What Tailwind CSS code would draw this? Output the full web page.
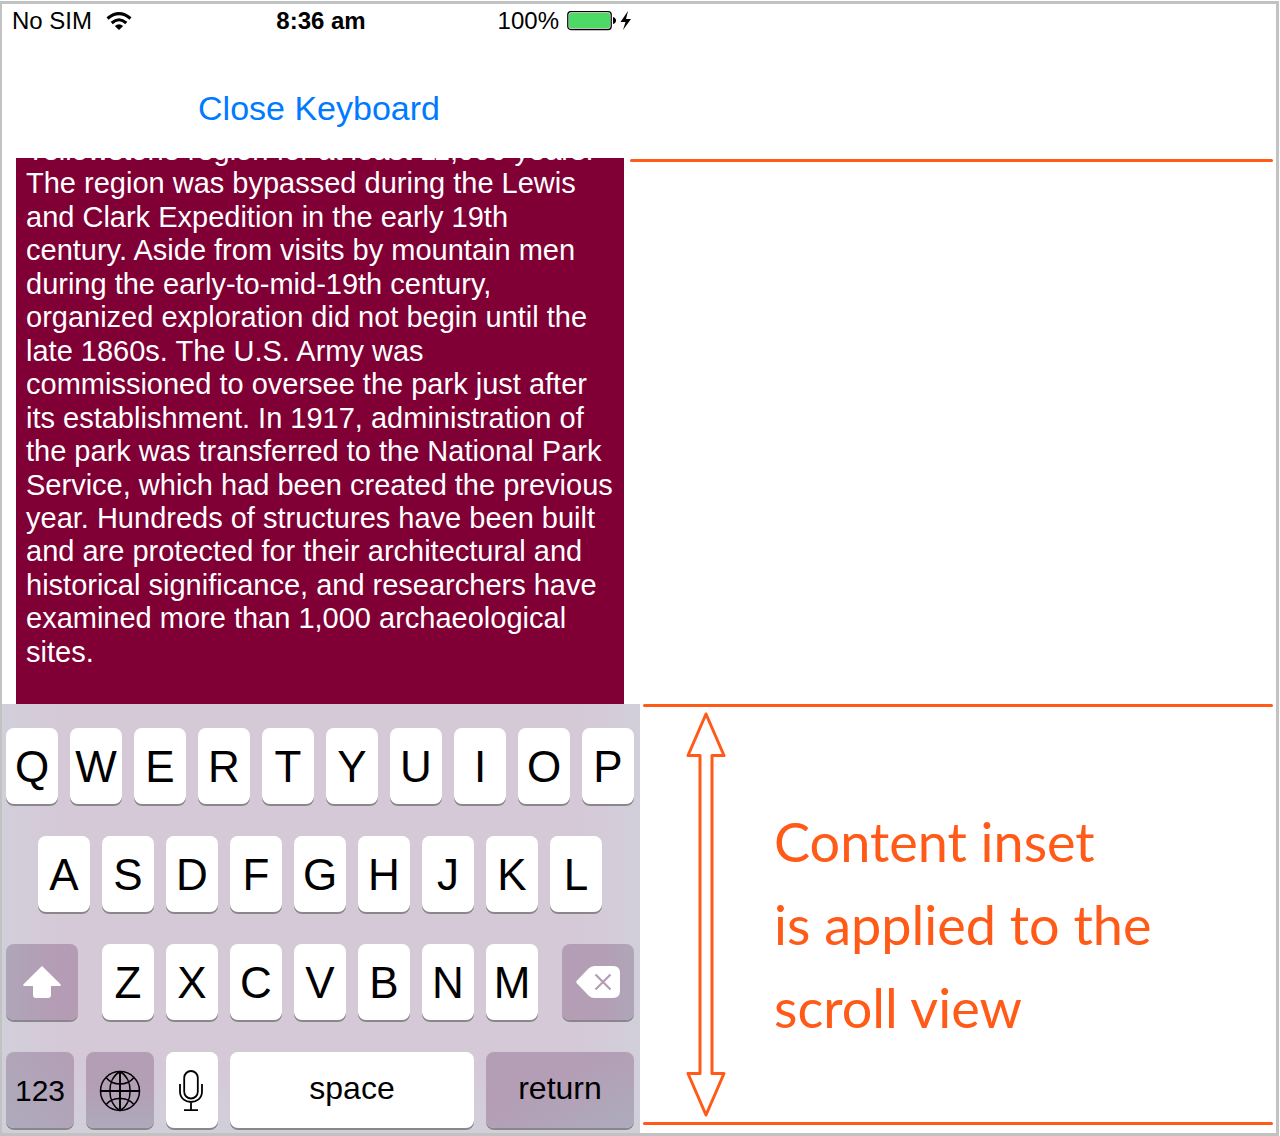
<!DOCTYPE html>
<html lang="en">
<head>
<meta charset="utf-8">
<title>Keyboard content inset</title>
<script src="https://cdn.jsdelivr.net/npm/@tailwindcss/browser@4"></script>
</head>
<body class="flex min-h-screen flex-col bg-white pt-px pr-px font-['Liberation_Sans',Arial,sans-serif] text-black">
<main class="flex flex-1 flex-col border-3 border-l-2 border-[#c1c2c2]">
  <div class="grid flex-1 grid-cols-[638fr_636fr]">
    <section class="flex flex-col">
      <header class="flex h-[154px] flex-col pr-1">
        <div class="grid grid-cols-[1fr_auto_1fr] items-center pt-[3px] pr-1 pl-2 text-2xl leading-7">
          <div class="flex items-center gap-[14px] pl-[2px]">
            <span>No SIM</span>
            <svg class="h-[19px] w-[26px]" viewBox="0 0 26 19" fill="none" stroke="#000" stroke-width="3" role="img" aria-label="Wi-Fi"><path d="M1.500 6.500Q13-3.300 24.500 6.500"/><path d="M5.700 11Q13 4.600 20.300 11"/><path d="M8.800 14Q13 10.600 17.200 14L13 18Z" fill="#000" stroke="none"/></svg>
          </div>
          <time class="font-bold">8:36 am</time>
          <div class="flex items-center justify-end gap-2">
            <span>100%</span>
            <svg class="h-6 w-[65px]" viewBox="0 0 65 24" role="img" aria-label="Battery charging"><rect x=".8" y="2.700" width="43.400" height="17.800" rx="3" fill="#fff" stroke="#000" stroke-width="1.300"/><rect x="2" y="4" width="41" height="15" rx="1.500" fill="#4cd964"/><path d="M46 8Q49 9 49 11.500T46 15Z"/><path d="M61 2L53.500 13H58.500L56 21L64 10H59Z"/></svg>
          </div>
        </div>
        <div class="flex flex-1 items-center justify-center pt-8 pb-[10px]">
          <button type="button" class="text-[34px] leading-10 text-[#007aff]">Close Keyboard</button>
        </div>
      </header>
      <div class="mr-4 ml-[14px] flex-1 overflow-hidden bg-[#800035] px-[10px]">
        <p class="-mt-6 flex h-[535px] flex-col justify-between text-[29px] leading-[33px] whitespace-nowrap text-white">
          <span>Yellowstone region for at least 11,000 years.</span>
          <span>The region was bypassed during the Lewis</span>
          <span>and Clark Expedition in the early 19th</span>
          <span>century. Aside from visits by mountain men</span>
          <span>during the early-to-mid-19th century,</span>
          <span>organized exploration did not begin until the</span>
          <span>late 1860s. The U.S. Army was</span>
          <span>commissioned to oversee the park just after</span>
          <span>its establishment. In 1917, administration of</span>
          <span>the park was transferred to the National Park</span>
          <span>Service, which had been created the previous</span>
          <span>year. Hundreds of structures have been built</span>
          <span>and are protected for their architectural and</span>
          <span>historical significance, and researchers have</span>
          <span>examined more than 1,000 archaeological</span>
          <span>sites.</span>
        </p>
      </div>
    </section>
    <div class="pt-[155px] pr-[3px]">
      <div class="-ml-[10px] h-[3px] rounded-full bg-[#ff5a17]"></div>
    </div>
  </div>

  <div class="grid grid-cols-[638fr_636fr]">
    <section aria-label="Keyboard" class="flex flex-col gap-8 bg-[linear-gradient(to_top,#d1cfda,transparent_16%),linear-gradient(to_right,#d1cfda,#d5c9d7_9%,#d5c9d7_91%,#d1cfda)] pt-6 pr-[6px] pb-[5px] pl-1 text-[44px] leading-none">
      <div class="grid h-[76px] grid-cols-10 gap-3">
        <button type="button" class="rounded-lg bg-white pt-[2px] shadow-[0_2px_0_#8b868c]">Q</button>
        <button type="button" class="rounded-lg bg-white pt-[2px] shadow-[0_2px_0_#8b868c]">W</button>
        <button type="button" class="rounded-lg bg-white pt-[2px] shadow-[0_2px_0_#8b868c]">E</button>
        <button type="button" class="rounded-lg bg-white pt-[2px] shadow-[0_2px_0_#8b868c]">R</button>
        <button type="button" class="rounded-lg bg-white pt-[2px] shadow-[0_2px_0_#8b868c]">T</button>
        <button type="button" class="rounded-lg bg-white pt-[2px] shadow-[0_2px_0_#8b868c]">Y</button>
        <button type="button" class="rounded-lg bg-white pt-[2px] shadow-[0_2px_0_#8b868c]">U</button>
        <button type="button" class="rounded-lg bg-white pt-[2px] shadow-[0_2px_0_#8b868c]">I</button>
        <button type="button" class="rounded-lg bg-white pt-[2px] shadow-[0_2px_0_#8b868c]">O</button>
        <button type="button" class="rounded-lg bg-white pt-[2px] shadow-[0_2px_0_#8b868c]">P</button>
      </div>
      <div class="grid h-[76px] grid-cols-9 gap-3 px-8">
        <button type="button" class="rounded-lg bg-white pt-[2px] shadow-[0_2px_0_#8b868c]">A</button>
        <button type="button" class="rounded-lg bg-white pt-[2px] shadow-[0_2px_0_#8b868c]">S</button>
        <button type="button" class="rounded-lg bg-white pt-[2px] shadow-[0_2px_0_#8b868c]">D</button>
        <button type="button" class="rounded-lg bg-white pt-[2px] shadow-[0_2px_0_#8b868c]">F</button>
        <button type="button" class="rounded-lg bg-white pt-[2px] shadow-[0_2px_0_#8b868c]">G</button>
        <button type="button" class="rounded-lg bg-white pt-[2px] shadow-[0_2px_0_#8b868c]">H</button>
        <button type="button" class="rounded-lg bg-white pt-[2px] shadow-[0_2px_0_#8b868c]">J</button>
        <button type="button" class="rounded-lg bg-white pt-[2px] shadow-[0_2px_0_#8b868c]">K</button>
        <button type="button" class="rounded-lg bg-white pt-[2px] shadow-[0_2px_0_#8b868c]">L</button>
      </div>
      <div class="grid h-[76px] grid-cols-[72fr_436fr_72fr] gap-6">
        <button type="button" aria-label="Shift" class="flex items-center justify-center rounded-lg bg-linear-to-r from-[#afa6b8] to-[#b49cb4] to-70% shadow-[0_2px_0_#8b868c]">
          <svg class="h-8 w-[38px]" viewBox="0 0 38 32" fill="#fff"><path d="M19 0L37.500 18.200Q38.500 20 36.500 20H28V29Q28 32 25 32H13Q10 32 10 29V20H1.500Q-.5 20 .5 18.200Z"/></svg>
        </button>
        <div class="grid grid-cols-7 gap-3">
          <button type="button" class="rounded-lg bg-white pt-[2px] shadow-[0_2px_0_#8b868c]">Z</button>
          <button type="button" class="rounded-lg bg-white pt-[2px] shadow-[0_2px_0_#8b868c]">X</button>
          <button type="button" class="rounded-lg bg-white pt-[2px] shadow-[0_2px_0_#8b868c]">C</button>
          <button type="button" class="rounded-lg bg-white pt-[2px] shadow-[0_2px_0_#8b868c]">V</button>
          <button type="button" class="rounded-lg bg-white pt-[2px] shadow-[0_2px_0_#8b868c]">B</button>
          <button type="button" class="rounded-lg bg-white pt-[2px] shadow-[0_2px_0_#8b868c]">N</button>
          <button type="button" class="rounded-lg bg-white pt-[2px] shadow-[0_2px_0_#8b868c]">M</button>
        </div>
        <button type="button" aria-label="Delete" class="flex items-center justify-center rounded-lg bg-linear-to-r from-[#b49eb5] from-50% to-[#afa6b8] shadow-[0_2px_0_#8b868c]">
          <svg class="h-8 w-11" viewBox="0 0 44 32"><path d="M1 14.500L12.500 2.500Q15 0 18.500 0H37Q44 0 44 7V25Q44 32 37 32H18.500Q15 32 12.500 29.500L1 17.500Q-.5 16 1 14.500Z" fill="#fff"/><path d="M19.500 8.500L34.500 23.500M34.500 8.500L19.500 23.500" stroke="#b49eb5" stroke-width="2.200"/></svg>
        </button>
      </div>
      <div class="grid h-[76px] grid-cols-[68fr_68fr_52fr_244fr_148fr] gap-3 text-[32px]">
        <button type="button" class="rounded-lg bg-linear-to-tr from-[#adabbd] to-[#b49eb5] pt-[2px] text-[30px] shadow-[0_2px_0_#8b868c]">123</button>
        <button type="button" aria-label="Switch language" class="flex items-center justify-center rounded-lg bg-linear-to-b from-[#b49eb5] from-40% to-[#aea9bb] pt-[2px] shadow-[0_2px_0_#8b868c]">
          <svg class="h-[42px] w-[42px]" viewBox="0 0 42 42" fill="none" stroke="#000" stroke-width="1.500"><circle cx="21" cy="21" r="19.500"/><path d="M21 1.500V40.500M1.500 21H40.500" stroke-width="1.900"/><path d="M21 1.500C7.500 9 7.500 33 21 40.500C34.500 33 34.500 9 21 1.500M7.500 8C14 16 28 16 34.500 8M7.500 34C14 26.500 28 26.500 34.500 34"/></svg>
        </button>
        <button type="button" aria-label="Dictate" class="flex items-center justify-center rounded-lg bg-white pt-[2px] pr-[2px] shadow-[0_2px_0_#8b868c]">
          <svg class="h-[42px] w-6" viewBox="0 0 24 42" fill="none" stroke="#000" stroke-width="1.800"><rect x="5.200" y="1" width="13.600" height="27.500" rx="6.800"/><path d="M1 14V21.500C1 35.500 23 35.500 23 21.500V14M12 32V40M5 40.200H19"/></svg>
        </button>
        <button type="button" class="rounded-lg bg-white pb-1 shadow-[0_2px_0_#8b868c]">space</button>
        <button type="button" class="rounded-lg bg-linear-to-br from-[#b49eb5] from-40% to-[#adabbd] pb-1 shadow-[0_2px_0_#8b868c]">return</button>
      </div>
    </section>

    <aside class="flex flex-col justify-between pr-[3px] pb-2 pl-[3px] text-[#ff5a17]">
      <div class="h-[3px] rounded-full bg-[#ff5a17]"></div>
      <div class="flex items-center gap-12 pl-[43px]">
        <svg class="h-[407px] w-10 shrink-0" viewBox="0 0 40 407" fill="none" stroke="#ff5a17" stroke-width="3" stroke-linejoin="round" aria-hidden="true"><path d="M20 3L38 44.500H26V362.500H38L20 404L2 362.500H14V44.500H2Z"/></svg>
        <p class="pt-5 font-['Lato',sans-serif] text-[54px] leading-[83px]">Content inset<br>is applied to the<br>scroll view</p>
      </div>
      <div class="h-[3px] rounded-full bg-[#ff5a17]"></div>
    </aside>
  </div>
</main>
</body>
</html>
